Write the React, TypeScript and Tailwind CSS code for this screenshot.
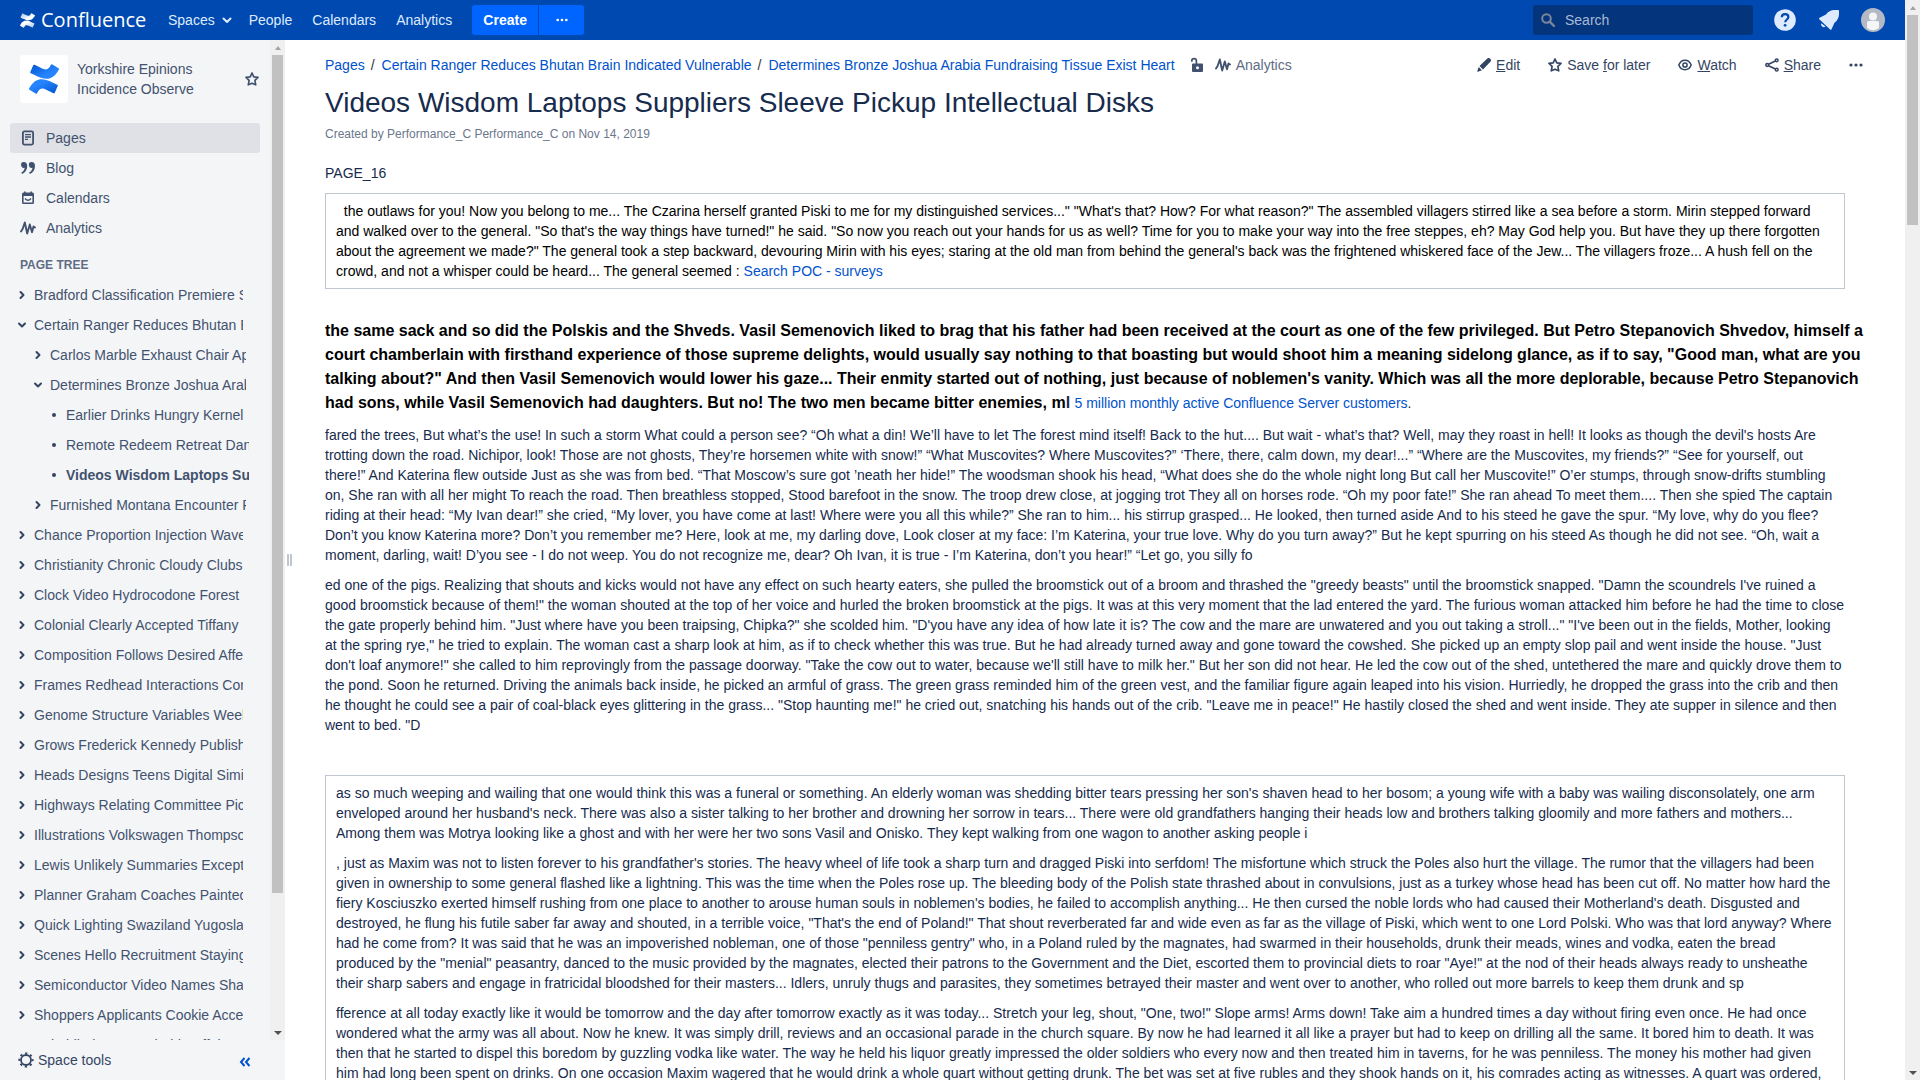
import type { ReactNode } from "react";

const WAVE_DOWN =
  "M.87 18.257c-.248.382-.53.875-.763 1.245a.764.764 0 0 0 .255 1.04l4.965 3.054a.764.764 0 0 0 1.058-.26c.199-.332.454-.763.733-1.221 1.967-3.247 3.945-2.853 7.508-1.146l4.957 2.337a.764.764 0 0 0 1.028-.382l2.364-5.346a.764.764 0 0 0-.382-1 599.851 599.851 0 0 1-4.965-2.361C10.911 10.97 5.224 11.185.87 18.257z";
const WAVE_UP =
  "M23.131 5.743c.249-.405.531-.875.764-1.25a.764.764 0 0 0-.256-1.034L18.675.404a.764.764 0 0 0-1.058.26c-.195.335-.451.763-.734 1.225-1.966 3.246-3.945 2.85-7.508 1.146L4.437.694a.764.764 0 0 0-1.027.382L1.046 6.422a.764.764 0 0 0 .382 1c1.039.49 3.105 1.467 4.965 2.361 6.698 3.246 12.392 3.029 16.738-4.04z";

function ConfluenceMark({ id, className, from, to }: { id: string; className: string; from: string; to: string }) {
  return (
    <svg viewBox="0 0 24 24" className={className} aria-hidden="true">
      <defs>
        <linearGradient id={`${id}-a`} x1="1" y1="1" x2="0.2" y2="0.2">
          <stop offset="0" stopColor={from} />
          <stop offset="0.8" stopColor={to} />
        </linearGradient>
        <linearGradient id={`${id}-b`} x1="0" y1="0" x2="0.8" y2="0.8">
          <stop offset="0" stopColor={from} />
          <stop offset="0.8" stopColor={to} />
        </linearGradient>
      </defs>
      <path d={WAVE_DOWN} fill={`url(#${id}-a)`} />
      <path d={WAVE_UP} fill={`url(#${id}-b)`} />
    </svg>
  );
}

function StarIcon({ className }: { className: string }) {
  return (
    <svg viewBox="1 1 14 14" className={className} fill="none" stroke="currentColor" strokeWidth="1.7" strokeLinejoin="round" aria-hidden="true">
      <path d="M8 2 9.800 5.900l4.200.5-3.100 2.900.8 4.500L8 12.200l-3.700 1.600.8-4.500L2 6.400l4.200-.5Z" />
    </svg>
  );
}

function PulseIcon({ className }: { className: string }) {
  return (
    <svg viewBox="0 0 16 16" className={className} fill="none" stroke="currentColor" strokeWidth="1.9" strokeLinejoin="round" strokeLinecap="round" aria-hidden="true">
      <path d="M1 11.500 2.600 9 4.800 2.500 7.200 13.500 9.800 4.500 12 12.200 13.500 6.500 15 7.500" />
    </svg>
  );
}

function PageIcon() {
  return (
    <svg viewBox="0 0 16 16" className="size-4" aria-hidden="true">
      <rect x="2.900" y="1.400" width="10.200" height="13.200" rx="1.500" fill="none" stroke="currentColor" strokeWidth="1.800" />
      <path d="M5 4.700h6M5 7h6M5 9.300h3" stroke="currentColor" strokeWidth="1.300" />
    </svg>
  );
}

function QuoteIcon() {
  return (
    <svg viewBox="0 0 16 16" className="size-4" fill="currentColor" aria-hidden="true">
      <path d="M3.900 2a2.900 2.900 0 1 0 .8 5.700C4.400 10 3.100 11.700 1.300 12.600L2.100 14C5.200 12.600 7.200 9.800 7.200 6c0-2.500-1.300-4-3.300-4ZM11.700 2a2.900 2.900 0 1 0 .8 5.700c-.3 2.300-1.600 4-3.400 4.900l.8 1.400c3.100-1.400 5.100-4.200 5.100-8 0-2.500-1.300-4-3.300-4Z" />
    </svg>
  );
}

function CalendarIcon() {
  return (
    <svg viewBox="0 0 16 16" className="size-4" aria-hidden="true">
      <path d="M2 4a1.500 1.500 0 0 1 1.500-1.500H4V1.500h1.600v1h4.800v-1H12v1h.5A1.500 1.500 0 0 1 14 4v8.500a1.500 1.500 0 0 1-1.500 1.500h-9A1.500 1.500 0 0 1 2 12.500ZM3.600 6v6.400h8.800V6Z" fill="currentColor" fillRule="evenodd" />
      <path d="M5 8.500Q8 12 11 8.500" fill="none" stroke="currentColor" strokeWidth="1.400" />
    </svg>
  );
}

function Dots({ className }: { className: string }) {
  return (
    <svg viewBox="0 0 14 14" className={className} fill="currentColor" aria-hidden="true">
      <circle cx="2" cy="7" r="1.600" />
      <circle cx="7" cy="7" r="1.600" />
      <circle cx="12" cy="7" r="1.600" />
    </svg>
  );
}

function Chevron({ open }: { open?: boolean }) {
  return (
    <svg viewBox="0 0 10 10" className="size-[10px] shrink-0 text-[#344563]" fill="none" stroke="currentColor" strokeWidth="2" strokeLinecap="round" strokeLinejoin="round" aria-hidden="true">
      <path d={open ? "M2 3.500 5 6.500 8 3.500" : "M3.500 2 6.500 5 3.500 8"} />
    </svg>
  );
}

function Scrollbar({ thumb }: { thumb: string }) {
  return (
    <div className="flex w-[15px] shrink-0 flex-col items-center bg-[#f0f0f0]" aria-hidden="true">
      <div className="flex h-[15px] items-center">
        <div className="border-x-[3px] border-b-4 border-x-transparent border-b-[#a3a3a3]" />
      </div>
      <div className="flex min-h-0 w-full flex-1 flex-col items-center">
        <div className={`w-[11px] bg-[#c1c1c1] ${thumb}`} />
      </div>
      <div className="flex h-[15px] items-center">
        <div className="border-x-[4px] border-t-4 border-x-transparent border-t-[#505050]" />
      </div>
    </div>
  );
}

function Header() {
  return (
    <header className="flex h-10 shrink-0 items-center bg-[#0049b0] px-5 text-[#deebff]">
      <a href="#home" className="flex items-center gap-[6px] text-white" aria-label="Confluence home">
        <ConfluenceMark id="top" className="size-[15px]" from="#9fbfe8" to="#ffffff" />
        <span className="w-[107px] font-['Open_Sans',sans-serif] text-xl leading-10">Confluence</span>
      </a>
      <nav className="ml-5 flex items-center">
        <button className="flex items-center gap-[7px]">
          Spaces
          <svg viewBox="0 0 10 10" className="size-[10px]" fill="none" stroke="currentColor" strokeWidth="2" strokeLinecap="round" strokeLinejoin="round" aria-hidden="true">
            <path d="M1.500 3.500 5 7 8.500 3.500" />
          </svg>
        </button>
        <a href="#people" className="ml-[17px]">People</a>
        <a href="#calendars" className="ml-5">Calendars</a>
        <a href="#analytics" className="ml-5">Analytics</a>
      </nav>
      <div className="ml-5 flex h-[30px] gap-px text-white">
        <button className="w-[66px] rounded-l-[3px] bg-[#0065ff] font-bold">Create</button>
        <button className="flex w-[45px] items-center justify-center rounded-r-[3px] bg-[#0065ff]" aria-label="Create from template">
          <Dots className="size-3" />
        </button>
      </div>
      <div className="ml-auto flex items-center">
        <label className="flex h-[30px] w-[220px] items-center gap-[10px] rounded-[3px] bg-[#04347b] pl-2">
          <svg viewBox="0 0 14 14" className="size-[14px] shrink-0 text-[#7a869a]" fill="none" stroke="currentColor" strokeWidth="2" aria-hidden="true">
            <circle cx="5.500" cy="5.500" r="4.300" />
            <path d="m8.700 8.700 4.300 4.300" strokeWidth="2.400" strokeLinecap="round" />
          </svg>
          <input type="search" aria-label="Search" placeholder="Search" className="min-w-0 flex-1 bg-transparent outline-none placeholder:text-[#a9bad4]" />
        </label>
        <button className="ml-5" aria-label="Help">
          <svg viewBox="0 0 24 24" className="size-6" aria-hidden="true">
            <circle cx="12" cy="12" r="10.800" fill="#deebff" />
            <path d="M8.800 9.300c0-2 1.400-3.200 3.300-3.200s3.300 1.200 3.300 2.900c0 2.500-3.200 2.500-3.200 5.200" fill="none" stroke="#0049b0" strokeWidth="2.200" />
            <circle cx="12.100" cy="17.300" r="1.400" fill="#0049b0" />
          </svg>
        </button>
        <button className="ml-5" aria-label="Notifications">
          <svg viewBox="0 0 24 24" className="size-6" fill="#deebff" aria-hidden="true">
            <path d="M2.300 11.200c-.5-.5-.3-1.100.3-1.400L9 6.500C11 3.500 14 2 17.500 2h3.800c.5 0 .7.300.7.700v3.600c0 3.200-1.400 6.200-4.500 8.500l-3 6.500c-.3.600-.9.700-1.400.2Z" />
            <path d="M4.200 15.200a2.800 2.800 0 0 0 4.400 3.200Z" />
          </svg>
        </button>
        <button className="ml-5" aria-label="Profile">
          <svg viewBox="0 0 24 24" className="size-6" aria-hidden="true">
            <circle cx="12" cy="12" r="12" fill="#b3bac5" />
            <circle cx="12" cy="8.500" r="4" fill="#f4f5f7" />
            <path d="M6 14.500a1.500 1.500 0 0 1 1.500-1.500h9a1.500 1.500 0 0 1 1.500 1.500V20a10 10 0 0 1-12 0Z" fill="#f4f5f7" />
          </svg>
        </button>
      </div>
    </header>
  );
}

const sections: { label: string; icon: ReactNode; active?: boolean }[] = [
  { label: "Pages", icon: <PageIcon />, active: true },
  { label: "Blog", icon: <QuoteIcon /> },
  { label: "Calendars", icon: <CalendarIcon /> },
  { label: "Analytics", icon: <PulseIcon className="size-4" /> },
];

type Node = { title: string; kids?: Node[]; leaf?: boolean; current?: boolean };

const tree: Node[] = [
  { title: "Bradford Classification Premiere Stadium" },
  {
    title: "Certain Ranger Reduces Bhutan Brain Indicated Vulnerable",
    kids: [
      { title: "Carlos Marble Exhaust Chair Approved" },
      {
        title: "Determines Bronze Joshua Arabia Fundraising Tissue Exist Heart",
        kids: [
          { title: "Earlier Drinks Hungry Kernel", leaf: true },
          { title: "Remote Redeem Retreat Daniel", leaf: true },
          { title: "Videos Wisdom Laptops Suppliers Sleeve Pickup Intellectual Disks", leaf: true, current: true },
        ],
      },
      { title: "Furnished Montana Encounter Primary" },
    ],
  },
  { title: "Chance Proportion Injection Waves" },
  { title: "Christianity Chronic Cloudy Clubs" },
  { title: "Clock Video Hydrocodone Forest" },
  { title: "Colonial Clearly Accepted Tiffany" },
  { title: "Composition Follows Desired Affected" },
  { title: "Frames Redhead Interactions Constant" },
  { title: "Genome Structure Variables Weekly" },
  { title: "Grows Frederick Kennedy Publisher" },
  { title: "Heads Designs Teens Digital Similar" },
  { title: "Highways Relating Committee Pickup" },
  { title: "Illustrations Volkswagen Thompson" },
  { title: "Lewis Unlikely Summaries Exception" },
  { title: "Planner Graham Coaches Painted" },
  { title: "Quick Lighting Swaziland Yugoslavia" },
  { title: "Scenes Hello Recruitment Staying" },
  { title: "Semiconductor Video Names Shared" },
  { title: "Shoppers Applicants Cookie Accept" },
  { title: "Subsidiaries Household Buffalo" },
];

function Tree({ nodes, nested }: { nodes: Node[]; nested?: boolean }) {
  return (
    <ul className={nested ? "-mr-[3px] pl-4" : ""}>
      {nodes.map((n) => (
        <li key={n.title}>
          <div className="flex h-[30px] items-center gap-[7px]">
            {n.leaf ? (
              <span className="flex w-[10px] shrink-0 justify-center">
                <span className="size-1 rounded-full bg-[#344563]" />
              </span>
            ) : (
              <button aria-label={n.kids ? "Collapse" : "Expand"}>
                <Chevron open={!!n.kids} />
              </button>
            )}
            <a href="#page" className={`min-w-0 flex-1 overflow-hidden whitespace-nowrap ${n.current ? "font-bold" : ""}`}>
              {n.title}
            </a>
          </div>
          {n.kids && <Tree nodes={n.kids} nested />}
        </li>
      ))}
    </ul>
  );
}

function Sidebar() {
  return (
    <aside className="flex w-[285px] shrink-0 flex-col bg-[#f4f5f7] text-[#42526e]">
      <div className="flex min-h-0 flex-1">
        <div className="min-w-0 flex-1 overflow-hidden pt-[15px]">
          <div className="flex items-center pr-[11px] pl-5">
            <a href="#space" className="flex size-12 shrink-0 items-center justify-center rounded-[3px] bg-white" aria-label="Space home">
              <ConfluenceMark id="space" className="size-[30px]" from="#0052cc" to="#2684ff" />
            </a>
            <a href="#space" className="ml-[9px] w-[140px]">Yorkshire Epinions Incidence Observe</a>
            <button className="ml-auto" aria-label="Add to favourites">
              <StarIcon className="size-[14px]" />
            </button>
          </div>
          <ul className="mt-5 px-[10px]">
            {sections.map((s) => (
              <li key={s.label}>
                <a href="#section" className={s.active ? "flex h-[30px] items-center gap-[10px] rounded-[3px] bg-[#dfe1e6] pl-[10px]" : "flex h-[30px] items-center gap-[10px] pl-[10px]"}>
                  {s.icon}
                  {s.label}
                </a>
              </li>
            ))}
          </ul>
          <h2 className="mt-3 pl-5 text-xs leading-5 font-bold text-[#5e6c84]">PAGE TREE</h2>
          <div className="mt-[5px] pr-[27px] pl-[17px]">
            <Tree nodes={tree} />
          </div>
        </div>
        <Scrollbar thumb="h-[86.4%]" />
      </div>
      <div className="flex h-10 shrink-0 items-center pr-[34px] pl-[18px]">
        <button className="flex items-center gap-1 text-[#344563]">
          <svg viewBox="0 0 16 16" className="size-4" fill="none" stroke="currentColor" aria-hidden="true">
            <circle cx="8" cy="8" r="5" strokeWidth="1.800" />
            <circle cx="8" cy="8" r="6.700" strokeWidth="1.800" strokeDasharray="2.300 2.962" strokeDashoffset="1.150" />
          </svg>
          Space tools
        </button>
        <button className="mt-1 ml-auto text-[#0052cc]" aria-label="Collapse sidebar">
          <svg viewBox="0 0 12 12" className="size-3" fill="none" stroke="currentColor" strokeWidth="2" aria-hidden="true">
            <path d="M5.500 2 2 6l3.500 4M10.500 2 7 6l3.500 4" />
          </svg>
        </button>
      </div>
    </aside>
  );
}

function Action({ icon, children }: { icon: ReactNode; children: ReactNode }) {
  return (
    <button className="flex items-center gap-[5px] text-[#344563]">
      {icon}
      <span>{children}</span>
    </button>
  );
}

function Toolbar() {
  return (
    <div className="flex items-center justify-between">
      <nav className="flex items-center whitespace-nowrap" aria-label="Breadcrumb">
        <ol className="flex items-center text-[#0052cc]">
          <li><a href="#pages">Pages</a></li>
          <li><span className="pr-[7px] pl-[6px] text-[#333333]">/</span><a href="#parent">Certain Ranger Reduces Bhutan Brain Indicated Vulnerable</a></li>
          <li><span className="pr-[7px] pl-[6px] text-[#333333]">/</span><a href="#parent">Determines Bronze Joshua Arabia Fundraising Tissue Exist Heart</a></li>
        </ol>
        <button className="ml-[14px] text-[#42526e]" aria-label="Unrestricted">
          <svg viewBox="0 0 16 16" className="size-4" aria-hidden="true">
            <path d="M2.800 4.800V4a2.300 2.300 0 0 1 4.600 0v3" fill="none" stroke="currentColor" strokeWidth="1.700" />
            <path d="M4 6.500h9a1 1 0 0 1 1 1V14a1 1 0 0 1-1 1H4a1 1 0 0 1-1-1V7.500a1 1 0 0 1 1-1Zm4.500 2.700a1.500 1.500 0 1 0 0 3 1.500 1.500 0 0 0 0-3Z" fill="currentColor" fillRule="evenodd" />
          </svg>
        </button>
        <a href="#analytics" className="ml-[10px] flex items-center gap-[5px] text-[#5e6c84]">
          <PulseIcon className="size-4 text-[#42526e]" />
          Analytics
        </a>
      </nav>
      <div className="-mr-[18px] flex items-center gap-7 whitespace-nowrap">
        <Action
          icon={
            <svg viewBox="1 1 14 14" className="size-[14px]" fill="currentColor" aria-hidden="true">
              <path d="M11.300 1.600a1.800 1.800 0 0 1 2.600 0l.5.500a1.800 1.800 0 0 1 0 2.600L7 12.500 3.500 9ZM2.700 10l3.200 3.300-4 1.400c-.4.100-.8-.2-.6-.7Z" />
            </svg>
          }
        >
          <u>E</u>dit
        </Action>
        <Action icon={<StarIcon className="size-[14px]" />}>Save <u>f</u>or later</Action>
        <Action
          icon={
            <svg viewBox="1 1 14 14" className="size-[14px]" fill="none" stroke="currentColor" strokeWidth="1.500" aria-hidden="true">
              <path d="M1.800 8C3 5 5.200 3.300 8 3.300S13 5 14.200 8C13 11 10.800 12.700 8 12.700S3 11 1.800 8Z" />
              <circle cx="8" cy="8" r="2.100" />
            </svg>
          }
        >
          <u>W</u>atch
        </Action>
        <Action
          icon={
            <svg viewBox="1 1 14 14" className="size-[14px]" fill="none" stroke="currentColor" strokeWidth="1.500" aria-hidden="true">
              <circle cx="3.200" cy="8" r="1.400" />
              <circle cx="12.700" cy="3.300" r="1.400" />
              <circle cx="12.700" cy="12.700" r="1.400" />
              <path d="M4.500 7.300 11.400 4M4.500 8.700l6.900 3.300" />
            </svg>
          }
        >
          <u>S</u>hare
        </Action>
        <button className="text-[#344563]" aria-label="More actions">
          <Dots className="size-[14px]" />
        </button>
      </div>
    </div>
  );
}

function Article() {
  return (
    <main className="min-w-0 flex-1 overflow-hidden pt-[15px] pr-[60px] pl-[30px] text-[#172b4d]">
      <Toolbar />
      <h1 className="mt-3 text-[28px] leading-8">Videos Wisdom Laptops Suppliers Sleeve Pickup Intellectual Disks</h1>
      <p className="mt-[5px] text-xs leading-5 text-[#6b778c]">Created by Performance_C Performance_C on Nov 14, 2019</p>
      <p className="mt-[19px]">PAGE_16</p>
      <section className="mt-[10px] border border-[#c1c7d0] px-[10px] py-[7px] text-black">
        <p>
          {"\u00a0 "}the outlaws for you! Now you belong to me... The Czarina herself granted Piski to me for my distinguished services..." "What's that? How? For what reason?" The assembled villagers stirred like a sea before a storm. Mirin stepped forward and walked over to the general. "So that's the way things have turned!" he said. "So now you reach out your hands for us as well? Time for you to make your way into the free steppes, eh? May God help you. But have they up there forgotten about the agreement we made?" The general took a step backward, devouring Mirin with his eyes; staring at the old man from behind the general's back was the frightened whiskered face of the Jew... The villagers froze... A hush fell on the crowd, and not a whisper could be heard... The general seemed : <a href="#surveys" className="text-[#0052cc]">Search POC - surveys</a>
        </p>
      </section>
      <p className="mt-[30px] -mr-6 text-base leading-6">
        <strong className="text-black">
          the same sack and so did the Polskis and the Shveds. Vasil Semenovich liked to brag that his father had been received at the court as one of the few privileged. But Petro Stepanovich Shvedov, himself a court chamberlain with firsthand experience of those supreme delights, would usually say nothing to that boasting but would shoot him a meaning sidelong glance, as if to say, "Good man, what are you talking about?" And then Vasil Semenovich would lower his gaze... Their enmity started out of nothing, just because of noblemen's vanity. Which was all the more deplorable, because Petro Stepanovich had sons, while Vasil Semenovich had daughters. But no! The two men became bitter enemies, m
        </strong>
        <strong>l</strong> <span className="text-sm"><a href="#customers" className="text-[#0052cc]">5 million monthly active Confluence Server customers</a>.</span>
      </p>
      <p className="mt-[10px]">
        fared the trees, But what’s the use! In such a storm What could a person see? “Oh what a din! We’ll have to let The forest mind itself! Back to the hut.... But wait - what’s that? Well, may they roast in hell! It looks as though the devil's hosts Are trotting down the road. Nichipor, look! Those are not ghosts, They’re horsemen white with snow!” “What Muscovites? Where Muscovites?” ‘There, there, calm down, my dear!...” “Where are the Muscovites, my friends?” “See for yourself, out there!” And Katerina flew outside Just as she was from bed. “That Moscow’s sure got ’neath her hide!” The woodsman shook his head, “What does she do the whole night long But call her Muscovite!” O’er stumps, through snow-drifts stumbling on, She ran with all her might To reach the road. Then breathless stopped, Stood barefoot in the snow. The troop drew close, at jogging trot They all on horses rode. “Oh my poor fate!” She ran ahead To meet them.... Then she spied The captain riding at their head: “My Ivan dear!” she cried, “My lover, you have come at last! Where were you all this while?” She ran to him... his stirrup grasped... He looked, then turned aside And to his steed he gave the spur. “My love, why do you flee? Don’t you know Katerina more? Don’t you remember me? Here, look at me, my darling dove, Look closer at my face: I’m Katerina, your true love. Why do you turn away?” But he kept spurring on his steed As though he did not see. “Oh, wait a moment, darling, wait! D’you see - I do not weep. You do not recognize me, dear? Oh Ivan, it is true - I’m Katerina, don’t you hear!” “Let go, you silly fo
      </p>
      <p className="mt-[10px]">
        ed one of the pigs. Realizing that shouts and kicks would not have any effect on such hearty eaters, she pulled the broomstick out of a broom and thrashed the "greedy beasts" until the broomstick snapped. "Damn the scoundrels I've ruined a good broomstick because of them!" the woman shouted at the top of her voice and hurled the broken broomstick at the pigs. It was at this very moment that the lad entered the yard. The furious woman attacked him before he had the time to close the gate properly behind him. "Just where have you been traipsing, Chipka?" she scolded him. "D'you have any idea of how late it is? The cow and the mare are unwatered and you out taking a stroll..." "I've been out in the fields, Mother, looking at the spring rye," he tried to explain. The woman cast a sharp look at him, as if to check whether this was true. But he had already turned away and gone toward the cowshed. She picked up an empty slop pail and went inside the house. "Just don't loaf anymore!" she called to him reprovingly from the passage doorway. "Take the cow out to water, because we'll still have to milk her." But her son did not hear. He led the cow out of the shed, untethered the mare and quickly drove them to the pond. Soon he returned. Driving the animals back inside, he picked an armful of grass. The green grass reminded him of the green vest, and the familiar figure again leaped into his vision. Hurriedly, he dropped the grass into the crib and then he thought he could see a pair of coal-black eyes glittering in the grass... "Stop haunting me!" he cried out, snatching his hands out of the crib. "Leave me in peace!" He hastily closed the shed and went inside. They ate supper in silence and then went to bed. "D
      </p>
      <section className="mt-10 space-y-[10px] border border-[#c1c7d0] px-[10px] py-[7px]">
        <p>
          as so much weeping and wailing that one would think this was a funeral or something. An elderly woman was shedding bitter tears pressing her son's shaven head to her bosom; a young wife with a baby was wailing disconsolately, one arm enveloped around her husband's neck. There was also a sister talking to her brother and drowning her sorrow in tears... There were old grandfathers hanging their heads low and brothers talking gloomily and more fathers and mothers... Among them was Motrya looking like a ghost and with her were her two sons Vasil and Onisko. They kept walking from one wagon to another asking people i
        </p>
        <p>
          , just as Maxim was not to listen forever to his grandfather's stories. The heavy wheel of life took a sharp turn and dragged Piski into serfdom! The misfortune which struck the Poles also hurt the village. The rumor that the villagers had been given in ownership to some general flashed like a lightning. This was the time when the Poles rose up. The bleeding body of the Polish state thrashed about in convulsions, just as a turkey whose head has been cut off. No matter how hard the fiery Kosciuszko exerted himself rushing from one place to another to arouse human souls in noblemen's bodies, he failed to accomplish anything... He then cursed the noble lords who had caused their Motherland's death. Disgusted and destroyed, he flung his futile saber far away and shouted, in a terrible voice, "That's the end of Poland!" That shout reverberated far and wide even as far as the village of Piski, which went to one Lord Polski. Who was that lord anyway? Where had he come from? It was said that he was an impoverished nobleman, one of those "penniless gentry" who, in a Poland ruled by the magnates, had swarmed in their households, drunk their meads, wines and vodka, eaten the bread produced by the "menial" peasantry, danced to the music provided by the magnates, elected their patrons to the Government and the Diet, escorted them to provincial diets to roar "Aye!" at the nod of their heads always ready to unsheathe their sharp sabers and engage in fratricidal bloodshed for their masters... Idlers, unruly thugs and parasites, they sometimes betrayed their master and went over to another, who rolled out more barrels to keep them drunk and sp
        </p>
        <p>
          fference at all today exactly like it would be tomorrow and the day after tomorrow exactly as it was today... Stretch your leg, shout, "One, two!" Slope arms! Arms down! Take aim a hundred times a day without firing even once. He had once wondered what the army was all about. Now he knew. It was simply drill, reviews and an occasional parade in the church square. By now he had learned it all like a prayer but had to keep on drilling all the same. It bored him to death. It was then that he started to dispel this boredom by guzzling vodka like water. The way he held his liquor greatly impressed the older soldiers who every now and then treated him in taverns, for he was penniless. The money his mother had given him had long been spent on drinks. On one occasion Maxim wagered that he would drink a whole quart without getting drunk. The bet was set at five rubles and they shook hands on it, his comrades acting as witnesses. A quart was ordered,
        </p>
      </section>
    </main>
  );
}

export default function App() {
  return (
    <div className="flex h-screen overflow-hidden bg-white font-['Liberation_Sans',Arial,sans-serif] text-sm leading-5">
      <div className="flex min-w-0 flex-1 flex-col">
        <Header />
        <div className="flex min-h-0 flex-1">
          <Sidebar />
          <div className="flex w-[10px] shrink-0 items-center gap-px pl-[2px]" role="separator" aria-orientation="vertical">
            <span className="h-3 w-[2px] bg-[#c1c7d0]" />
            <span className="h-3 w-[2px] bg-[#c1c7d0]" />
          </div>
          <Article />
        </div>
      </div>
      <Scrollbar thumb="h-[20%]" />
    </div>
  );
}
